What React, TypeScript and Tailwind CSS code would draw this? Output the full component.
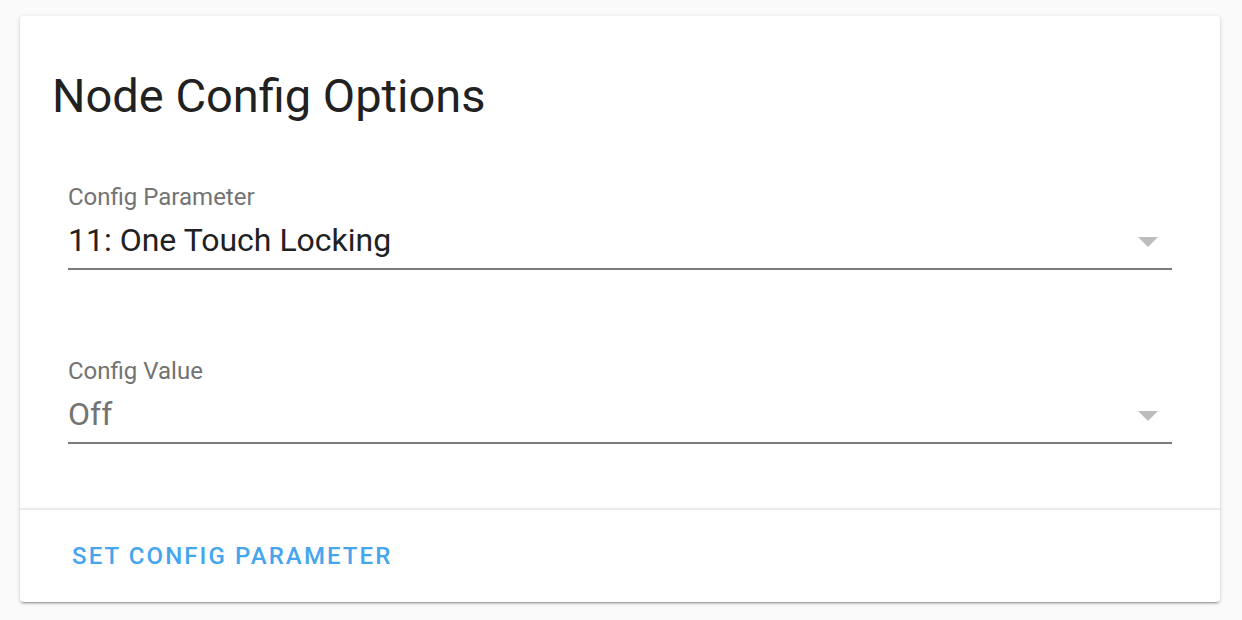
import React from "react";

function Arrow() {
  return (
    <svg width="20" height="10" viewBox="0 0 20 10" className="block">
      <path d="M0 0 L20 0 L10 10 Z" fill="#bdbdbd" />
    </svg>
  );
}

function Field({ label, value, valueClass }: { label: string; value: string; valueClass: string }) {
  return (
    <div className="flex flex-col">
      <div className="text-[24px] leading-none text-[#737373]">{label}</div>
      <div className="mt-[15px] flex items-center justify-between pr-[14px]">
        <div className={`text-[32px] leading-none ${valueClass}`}>{value}</div>
        <div className="mt-[4px]">
          <Arrow />
        </div>
      </div>
      <div className="mt-[12px] h-[2px] bg-[#7b7b7b]" />
    </div>
  );
}

export default function App() {
  return (
    <div
      className="min-h-[620px] bg-[#fafafa] pt-[16px] pl-[20px]"
      style={{ fontFamily: "Roboto, 'Noto Sans', sans-serif" }}
    >
      <div className="flex h-[586px] w-[1200px] flex-col rounded-[4px] bg-white shadow-[0_2px_2px_0_rgba(0,0,0,0.14),0_1px_5px_0_rgba(0,0,0,0.12),0_3px_1px_-2px_rgba(0,0,0,0.2)]">
        <div className="pl-[32px] pt-[56px] text-[47px] leading-none text-[#212121]">Node Config Options</div>
        <div className="mt-[66px] flex flex-col gap-[89px] pl-[48px] pr-[48px]">
          <Field label="Config Parameter" value="11: One Touch Locking" valueClass="text-[#212121]" />
          <Field label="Config Value" value="Off" valueClass="text-[#737373]" />
        </div>
        <div className="mt-[64px] h-[2px] bg-[#ebebeb]" />
        <div className="pl-[52px] pt-[34px]">
          <span className="text-[24px] font-medium uppercase leading-none tracking-[2.1px] text-[#45a6ee]">
            Set Config Parameter
          </span>
        </div>
      </div>
    </div>
  );
}
